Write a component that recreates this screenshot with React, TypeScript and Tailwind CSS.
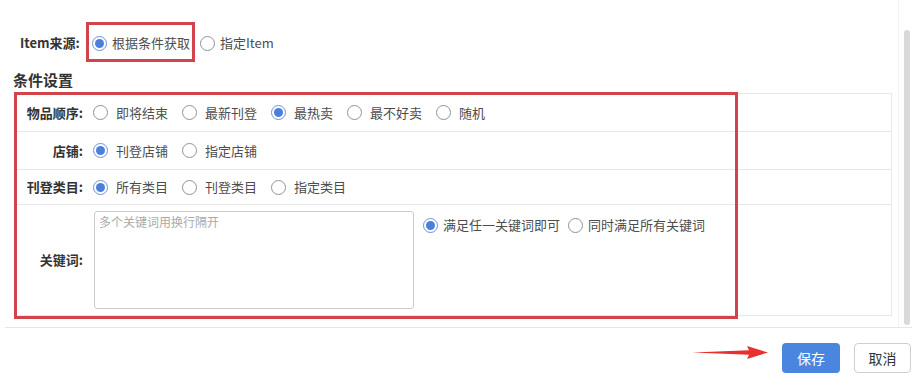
const font = "font-['Noto_Sans_CJK_SC','Noto_Sans',sans-serif]";

const Radio = ({ checked }: { checked?: boolean }) => (
  <span
    className={`flex h-[15px] w-[15px] shrink-0 items-center justify-center rounded-full border bg-white ${
      checked ? "border-[#6b93d6]" : "border-[#8f9398]"
    }`}
  >
    {checked && <span className="h-[9px] w-[9px] rounded-full bg-[#4a7fdc]" />}
  </span>
);

interface OptionProps {
  label: string;
  checked?: boolean;
  gap?: string;
}

const Option = ({ label, checked, gap = "gap-[8px]" }: OptionProps) => (
  <label className={`flex items-center ${gap} text-[13px] leading-[20px] text-[#4d4d4d]`}>
    <Radio checked={checked} />
    <span>{label}</span>
  </label>
);

interface RowProps {
  label: string;
  options: string[];
  checked: number;
  height: string;
}

const OptionRow = ({ label, options, checked, height }: RowProps) => (
  <div className={`flex items-center border-b border-[#e8e8e8] ${height}`}>
    <span className="w-[78px] shrink-0 pr-[10px] text-right text-[13px] font-bold text-[#333]">
      {label}
    </span>
    <div className="flex items-center gap-[14px]">
      {options.map((o, i) => (
        <Option key={o} label={o} checked={i === checked} />
      ))}
    </div>
  </div>
);

export default function App() {
  return (
    <div className={`relative h-[376px] w-[920px] overflow-hidden bg-white ${font}`}>
      <div className="ml-[5px] flex h-[328px] w-[907px] border-b border-[#e6e6e6]">
        <div className="flex-1 pl-[9px]">
          {/* Item来源 */}
          <div className="mt-[28px] flex h-[30px] items-center">
            <span className="w-[78px] shrink-0 pl-[6px] text-[13px] font-bold text-[#333]">Item来源:</span>
            <div className="flex items-center gap-[10px]">
              <Option label="根据条件获取" checked gap="gap-[5px]" />
              <Option label="指定Item" gap="gap-[5px]" />
            </div>
          </div>

          <div className="mt-[12px] -ml-px text-[15px] font-bold leading-[20px] text-[#333]">条件设置</div>

          <div className="mt-[3px] w-[878px] border border-b-0 border-[#e8e8e8]">
            <OptionRow
              label="物品顺序:"
              options={["即将结束", "最新刊登", "最热卖", "最不好卖", "随机"]}
              checked={2}
              height="h-[38px]"
            />
            <OptionRow label="店铺:" options={["刊登店铺", "指定店铺"]} checked={0} height="h-[38px]" />
            <OptionRow
              label="刊登类目:"
              options={["所有类目", "刊登类目", "指定类目"]}
              checked={0}
              height="h-[35px]"
            />
            <div className="flex h-[111px] items-center border-b border-[#e8e8e8]">
              <span className="w-[78px] shrink-0 pr-[10px] text-right text-[13px] font-bold text-[#333]">
                关键词:
              </span>
              <div className="flex h-full items-start pt-[6px]">
                <textarea
                  readOnly
                  placeholder="多个关键词用换行隔开"
                  className="ml-px h-[98px] w-[320px] resize-none rounded-[3px] border border-[#cccccc] px-[4px] py-[1px] text-[12px] leading-[18px] text-[#333] outline-none placeholder:text-[#aaaaaa]"
                />
                <div className="ml-[9px] flex h-[28px] items-center gap-[8px]">
                  <Option label="满足任一关键词即可" checked gap="gap-[5px]" />
                  <Option label="同时满足所有关键词" gap="gap-[5px]" />
                </div>
              </div>
            </div>
          </div>
        </div>

        {/* scrollbar */}
        <div className="flex w-[14px] shrink-0 justify-start border-l border-[#f2f2f2] pt-[30px] pb-[2px] pl-[5px]">
          <div className="h-[295px] w-[6px] rounded-full bg-[#d9d9d9]" />
        </div>
      </div>

      {/* footer */}
      <div className="flex justify-end gap-[14px] pt-[15px] pr-[9px]">
        <button className="h-[30px] w-[58px] rounded-[4px] bg-[#4a86e0] text-[14px] text-white">保存</button>
        <button className="h-[30px] w-[57px] rounded-[4px] border border-[#cfcfcf] bg-white text-[14px] text-[#333]">
          取消
        </button>
      </div>

      {/* annotations */}
      <div className="pointer-events-none absolute left-[86px] top-[22px] h-[40px] w-[109px] border-[3px] border-[#d2444b]" />
      <div className="pointer-events-none absolute left-[14px] top-[92px] h-[227px] w-[724px] border-[3px] border-[#d2444b]" />
      <svg className="absolute left-[692px] top-[345px]" width="77" height="15" viewBox="0 0 77 15">
        <polygon points="0,7.5 57,5.2 55,1 76,7.5 55,14 57,9.8" fill="#e8312f" />
      </svg>
    </div>
  );
}
